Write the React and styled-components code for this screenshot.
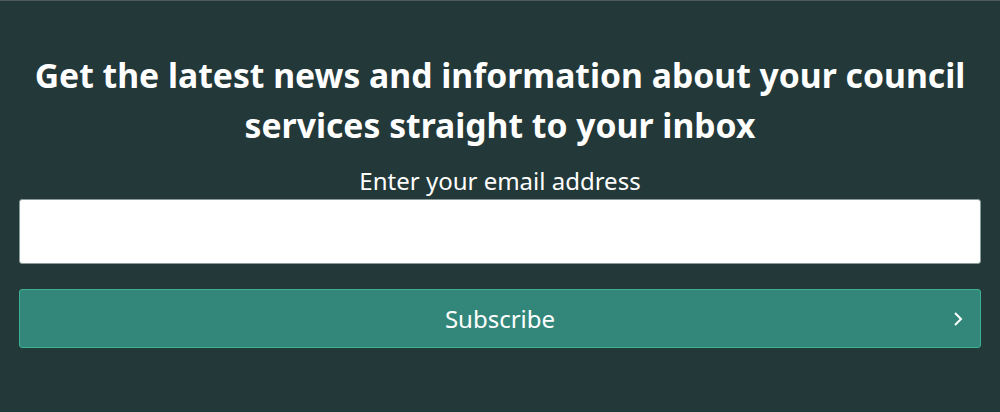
import React from "react";
import styled, { createGlobalStyle } from "styled-components";

const Global = createGlobalStyle`
    html, body {
        margin: 0;
        padding: 0;
        background: #233838;
        font-family: "Noto Sans", "Open Sans", sans-serif;
    }
`;

const Section = styled.section`
    background: #233838;
    border-top: 1px solid #4d5c5b;
    padding: 49px 19px 60px 19px;
    display: flex;
    flex-direction: column;
    align-items: stretch;
`;

const Heading = styled.h2`
    margin: 0;
    color: #ffffff;
    font-size: 33.7px;
    font-weight: 700;
    line-height: 50px;
    text-align: center;
    padding: 0 10px;
`;

const Form = styled.form`
    display: flex;
    flex-direction: column;
    margin-top: 15px;
`;

const Label = styled.label`
    color: #ffffff;
    font-size: 24px;
    line-height: 32px;
    text-align: center;
    margin-bottom: 2px;
`;

const Input = styled.input`
    height: 65px;
    box-sizing: border-box;
    border: 1px solid #8a9a9a;
    border-radius: 3px;
    background: #ffffff;
    font-size: 20px;
    padding: 0 14px;
    outline: none;
`;

const Button = styled.button`
    margin-top: 25px;
    height: 59px;
    box-sizing: border-box;
    background: #33877a;
    border: 1px solid #3fb091;
    border-radius: 3px;
    color: #ffffff;
    font-family: inherit;
    font-size: 24px;
    display: flex;
    align-items: center;
    justify-content: center;
    position: relative;
    cursor: pointer;
`;

const Chevron = styled.svg`
    position: absolute;
    right: 17px;
    top: 50%;
    transform: translateY(-50%);
`;

export default function App() {
    return (
        <>
            <Global />
            <Section>
                <Heading>
                    Get the latest news and information about your council services straight to your inbox
                </Heading>
                <Form onSubmit={(e) => e.preventDefault()}>
                    <Label htmlFor="email">Enter your email address</Label>
                    <Input id="email" type="email" />
                    <Button type="submit">
                        Subscribe
                        <Chevron width="10" height="16" viewBox="0 0 10 16">
                            <path d="M2 2 L8 8 L2 14" fill="none" stroke="#fff" strokeWidth="2" />
                        </Chevron>
                    </Button>
                </Form>
            </Section>
        </>
    );
}
